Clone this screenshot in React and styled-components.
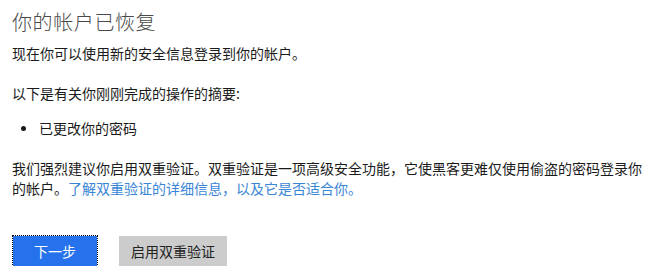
import React from "react";
import styled, { createGlobalStyle } from "styled-components";

const GlobalStyle = createGlobalStyle`
  html, body {
    margin: 0;
    padding: 0;
    background: #ffffff;
  }
  body {
    font-family: "Noto Sans CJK SC", "Noto Sans", sans-serif;
  }
`;

const Page = styled.div`
  padding: 8px 4px 0 12px;
  color: #1a1a1a;
  font-size: 14px;
  line-height: 20px;
`;

const Title = styled.h1`
  margin: 0;
  font-size: 20px;
  font-weight: 300;
  line-height: 28px;
  letter-spacing: 0.6px;
  color: #4a4a4a;
`;

const Text = styled.p`
  margin: ${(p) => p.$gap}px 0 0;
`;

const Summary = styled.ul`
  margin: 15px 0 0;
  padding: 0;
  list-style: none;
`;

const SummaryItem = styled.li`
  display: flex;
  align-items: center;
  gap: 13px;
  padding-left: 9px;

  &::before {
    content: "";
    width: 5px;
    height: 5px;
    border-radius: 50%;
    background: #1a1a1a;
  }
`;

const Link = styled.a`
  color: #3a86d6;
  text-decoration: none;
`;

const Actions = styled.div`
  display: flex;
  gap: 22px;
  margin-top: 38px;
  padding-left: 1px;
`;

const Button = styled.button`
  height: 30px;
  min-width: 84px;
  padding: 0 12px;
  border: none;
  font-family: inherit;
  font-size: 14px;
  line-height: 30px;
  cursor: pointer;
  background: ${(p) => (p.$primary ? "#2672ec" : "#cccccc")};
  color: ${(p) => (p.$primary ? "#ffffff" : "#222222")};
  outline: ${(p) => (p.$focused ? "1px dotted #000" : "none")};
`;

export default function App() {
  return (
    <>
      <GlobalStyle />
      <Page>
        <Title>你的帐户已恢复</Title>
        <Text $gap={7}>现在你可以使用新的安全信息登录到你的帐户。</Text>
        <Text $gap={20}>以下是有关你刚刚完成的操作的摘要:</Text>
        <Summary>
          <SummaryItem>已更改你的密码</SummaryItem>
        </Summary>
        <Text $gap={20}>
          我们强烈建议你启用双重验证。双重验证是一项高级安全功能，它使黑客更难仅使用偷盗的密码登录你的帐户。
          <Link href="#">了解双重验证的详细信息，以及它是否适合你。</Link>
        </Text>
        <Actions>
          <Button $primary $focused>下一步</Button>
          <Button>启用双重验证</Button>
        </Actions>
      </Page>
    </>
  );
}
